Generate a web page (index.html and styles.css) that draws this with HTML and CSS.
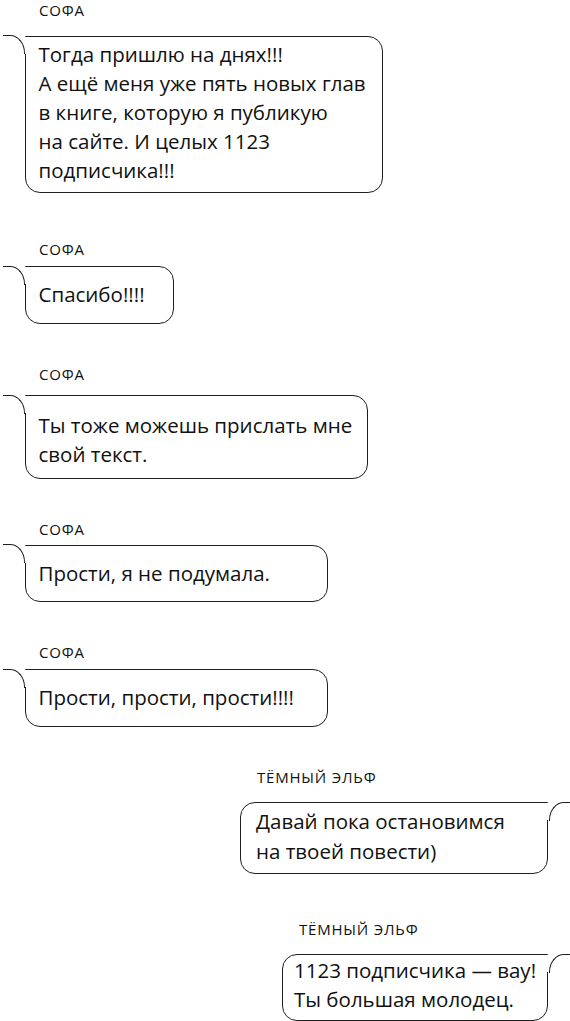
FILE: index.html
```html
<!DOCTYPE html>
<html>
<head>
    <meta charset="UTF-8">
    <title>Переписка</title>
    <link rel="stylesheet" href="styles.css">
</head>
<body>
    <div class="chat">
        <!-- Софа -->
        <div class="msg msg--in">
            <div class="author author--far">Софа</div>
            <div class="bubble bubble--in w-358">Тогда пришлю на днях!!!<br>А ещё меня уже пять новых глав<br>в книге, которую я публикую<br>на сайте. И целых 1123<br>подписчика!!!</div>
        </div>

        <div class="msg msg--in msg--spaced">
            <div class="author">Софа</div>
            <div class="bubble bubble--in bubble--single w-149">Спасибо!!!!</div>
        </div>

        <div class="msg msg--in">
            <div class="author author--mid">Софа</div>
            <div class="bubble bubble--in bubble--roomy w-343">Ты тоже можешь прислать мне<br>свой текст.</div>
        </div>

        <div class="msg msg--in">
            <div class="author author--near">Софа</div>
            <div class="bubble bubble--in bubble--single w-303">Прости, я не подумала.</div>
        </div>

        <div class="msg msg--in">
            <div class="author">Софа</div>
            <div class="bubble bubble--in bubble--single w-303">Прости, прости, прости!!!!</div>
        </div>

        <!-- Тёмный эльф -->
        <div class="msg msg--out">
            <div class="author author--far">Тёмный эльф</div>
            <div class="bubble bubble--out w-308">Давай пока остановимся<br>на твоей повести)</div>
        </div>

        <div class="msg msg--out msg--spaced-sm">
            <div class="author author--far">Тёмный эльф</div>
            <div class="bubble bubble--out bubble--snug w-266">1123 подписчика — вау!<br>Ты большая молодец.</div>
        </div>
    </div>
</body>
</html>
```

FILE: styles.css
```css
body {
    font-family: 'Open Sans', 'Noto Sans', sans-serif;
    margin: 0;
    padding: 2px 0 0;
    background: #fff;
    color: #111;
}
.chat {
    display: flex;
    flex-direction: column;
    padding: 0 22px 0 25px;
}
.msg {
    display: flex;
    flex-direction: column;
    align-items: flex-start;
    margin-top: 42px;
}
.msg:first-child {
    margin-top: 0;
}
.msg--spaced {
    margin-top: 48.5px;
}
.msg--spaced-sm {
    margin-top: 46.5px;
}
.msg--out {
    align-self: flex-end;
}
.author {
    font-size: 15px;
    line-height: 16px;
    letter-spacing: 0.8px;
    text-transform: uppercase;
    margin: 0 0 9px 14px;
}
.msg--out .author {
    margin-left: 17px;
}
.author--far {
    margin-bottom: 17.5px;
}
.author--mid {
    margin-bottom: 13.5px;
}
.author--near {
    margin-bottom: 7.5px;
}
.bubble {
    position: relative;
    box-sizing: border-box;
    border: 1.5px solid #1e1e1e;
    border-radius: 15px;
    padding: 3px 12px 7px 12.5px;
    font-size: 20.5px;
    line-height: 29px;
    white-space: nowrap;
}
.bubble--single {
    padding-top: 13px;
    padding-bottom: 13.5px;
}
.bubble--roomy {
    padding-top: 15px;
    padding-bottom: 10px;
    line-height: 28.5px;
}
.bubble--snug {
    padding-top: 1px;
    line-height: 28.5px;
}
.bubble--out {
    padding-left: 15px;
    line-height: 30px;
}
.bubble--snug.bubble--out {
    line-height: 28.5px;
    padding-left: 11px;
}

/* хвостик облачка */
.bubble::before,
.bubble::after {
    content: "";
    position: absolute;
    top: -1.5px;
}
.bubble::before {
    width: 21px;
    height: 18px;
    border-top: 1.5px solid #1e1e1e;
    z-index: 1;
}
.bubble::after {
    top: 0;
    width: 1.5px;
    height: 17px;
    background: #fff;
}
.bubble--in {
    border-top-left-radius: 0;
}
.bubble--in::before {
    left: -23.5px;
    border-right: 1.5px solid #1e1e1e;
    border-top-right-radius: 15px 18px;
}
.bubble--in::after {
    left: -1.5px;
}
.bubble--out {
    border-top-right-radius: 0;
}
.bubble--out::before {
    right: -23.5px;
    border-left: 1.5px solid #1e1e1e;
    border-top-left-radius: 15px 18px;
}
.bubble--out::after {
    right: -1.5px;
}

.w-358 { width: 358px; }
.w-149 { width: 149px; }
.w-343 { width: 343px; }
.w-303 { width: 303px; }
.w-308 { width: 308px; }
.w-266 { width: 266px; }
```
